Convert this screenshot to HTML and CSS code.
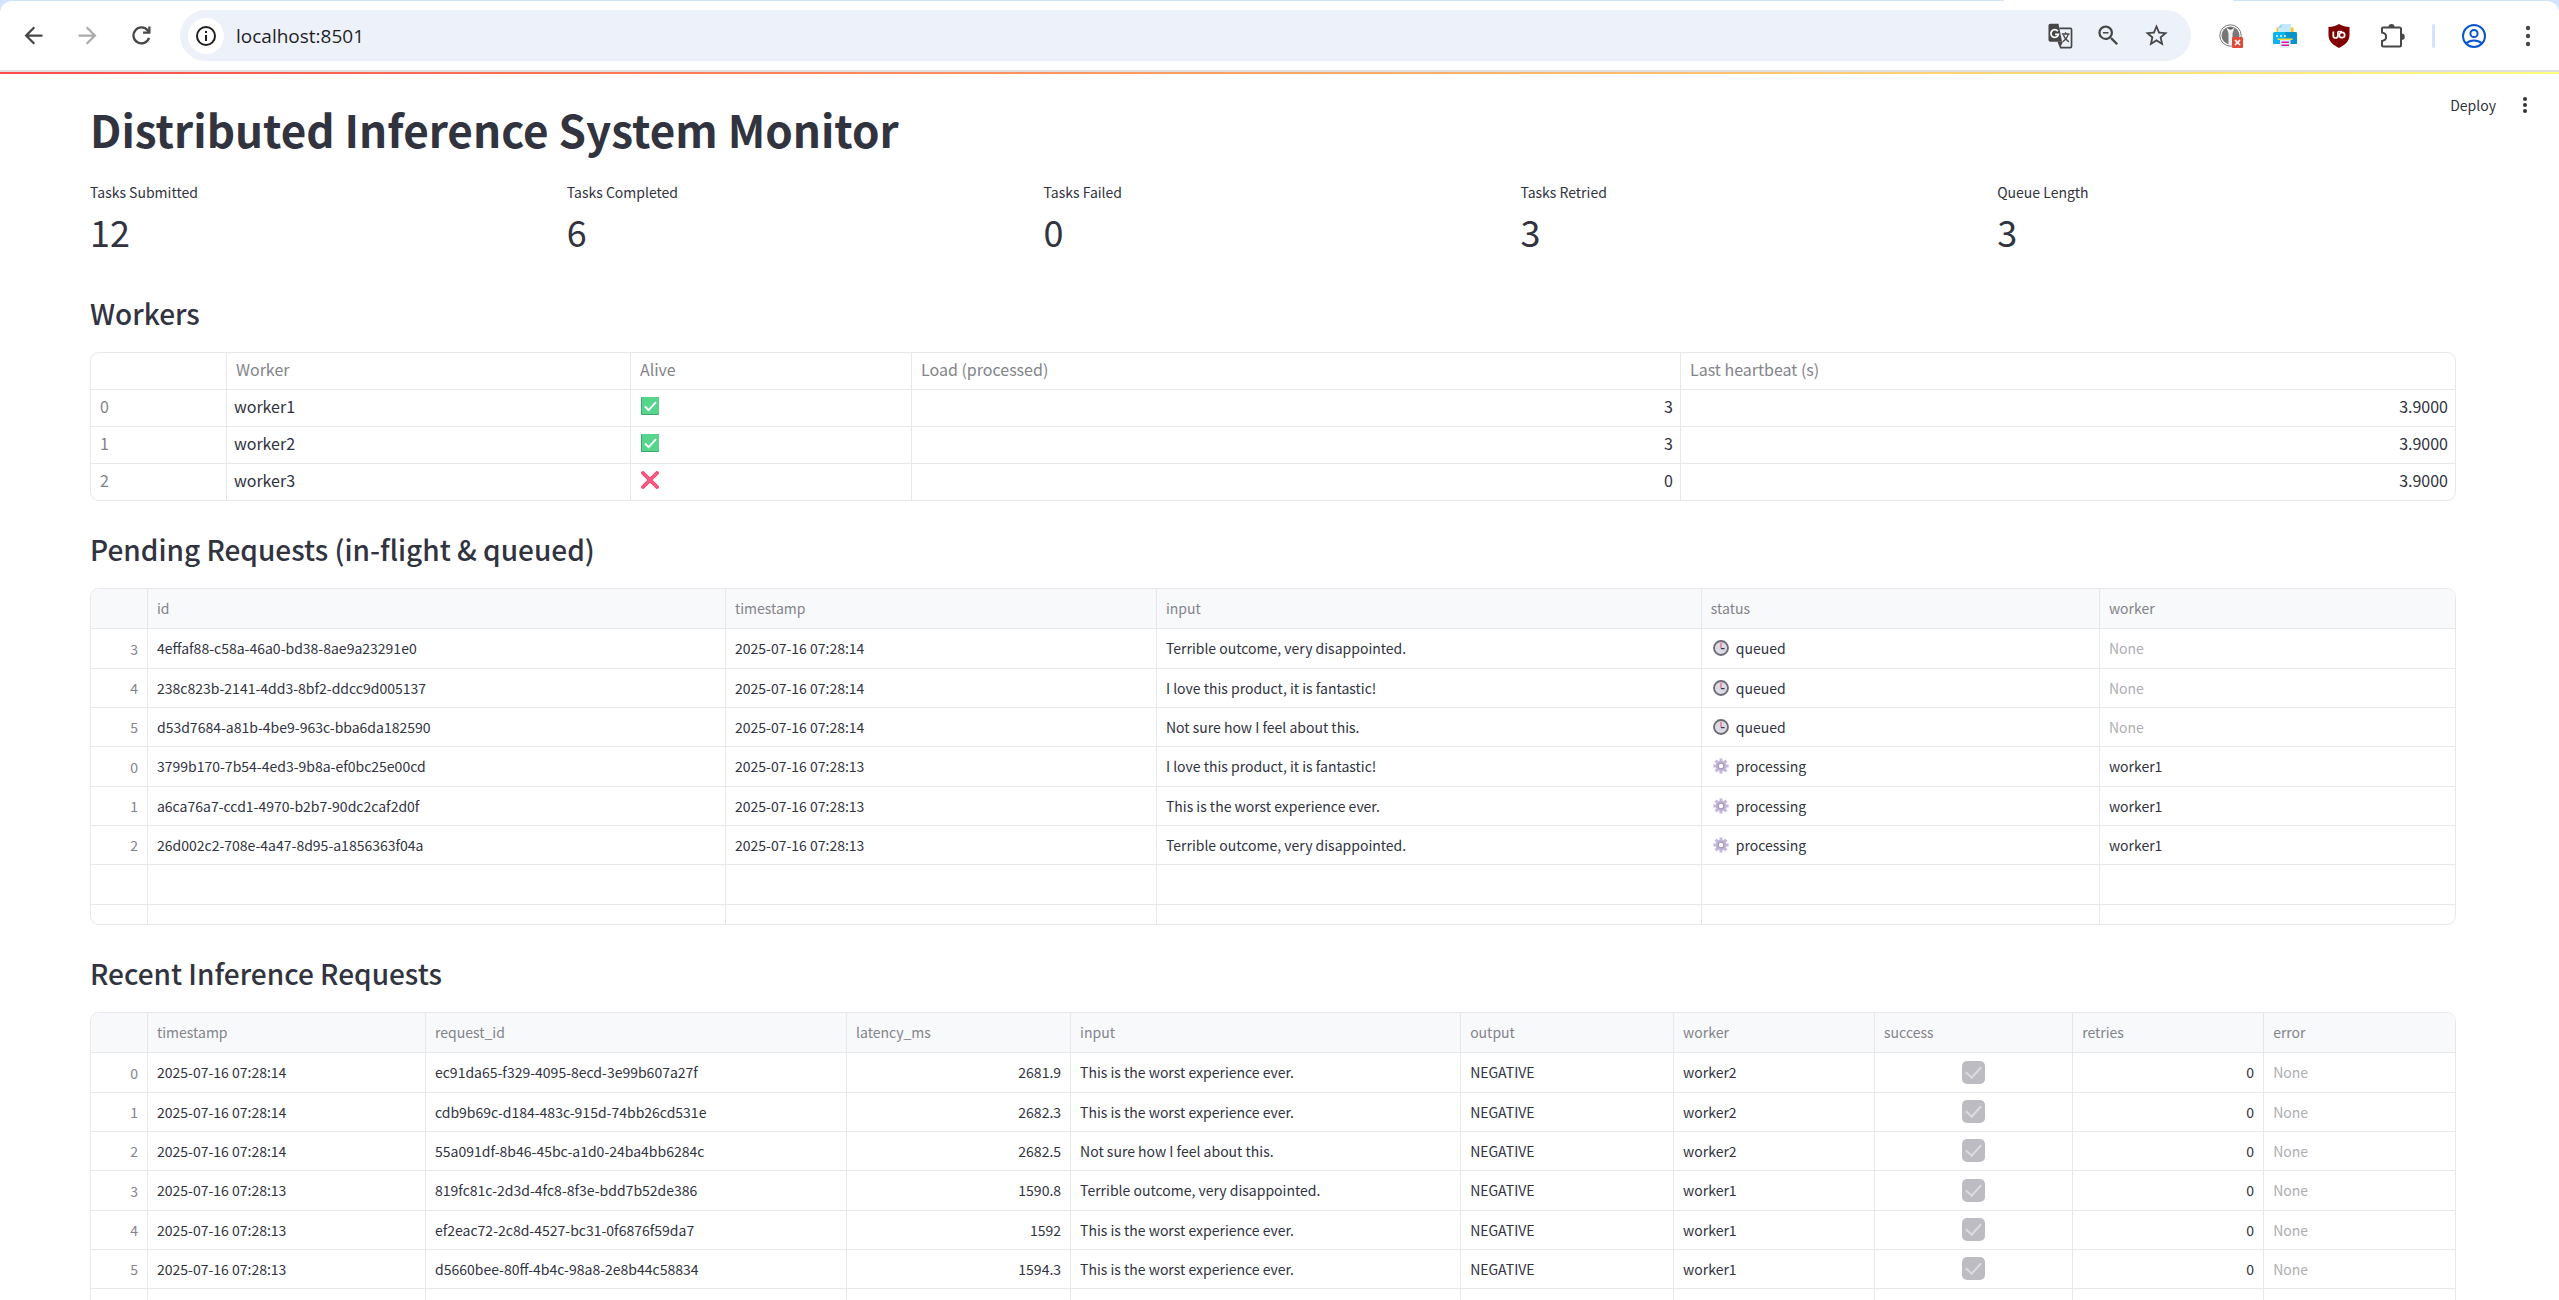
FILE: index.html
```html
<!DOCTYPE html>
<html lang="en">
<head>
<meta charset="utf-8">
<meta name="viewport" content="width=device-width, initial-scale=1">
<title>Distributed Inference System Monitor</title>
<link rel="stylesheet" href="styles.css">
</head>
<body>
<svg class="sprite" aria-hidden="true">
  <symbol id="i-check" viewBox="0 0 18 18">
    <rect width="18" height="18" rx="1" fill="#3fa673"/>
    <rect x="1" width="17" height="17" rx="1" fill="#55d68c"/>
    <path d="M4 9.5l3.6 3.7L15 5.2" fill="none" stroke="#fff" stroke-width="1.9"/>
  </symbol>
  <symbol id="i-cross" viewBox="0 0 18 18">
    <path d="M2 2l14 14M16 2L2 16" fill="none" stroke="#f8416f" stroke-width="3.8" stroke-linecap="round"/>
    <path d="M2 2l14 14M16 2L2 16" fill="none" stroke="#fb6184" stroke-width="1.6" stroke-linecap="round"/>
  </symbol>
  <symbol id="i-clock" viewBox="0 0 16 16">
    <circle cx="8" cy="8" r="7" fill="#dcdae2" stroke="#6c6a72" stroke-width="1.8"/>
    <path d="M8 2.8V8.6" stroke="#e8466f" stroke-width="1"/>
    <path d="M8 8.6h3.6" stroke="#40354f" stroke-width="1.3"/>
  </symbol>
  <symbol id="i-gear" viewBox="0 0 16 16">
    <g stroke="#c6b9dc" stroke-width="3">
      <path d="M8 .4v15.2M.4 8h15.2M2.6 2.6l10.800 10.800M13.400 2.600L2.600 13.400"/>
    </g>
    <circle cx="8" cy="8" r="5.400" fill="#c3b5da"/>
    <circle cx="8" cy="8" r="2.800" fill="#fff" stroke="#a69abb" stroke-width="1.200"/>
  </symbol>
</svg>

<header class="browser">
  <div class="tab-strip"><span class="tab-foot"></span></div>
  <nav class="toolbar" aria-label="Browser">
    <div class="nav-buttons">
      <button class="icon-btn" type="button" aria-label="Back"><svg class="icon" viewBox="0 0 24 24"><path d="M20 11H7.83l5.59-5.59L12 4l-8 8 8 8 1.41-1.41L7.83 13H20v-2z"/></svg></button>
      <button class="icon-btn muted" type="button" aria-label="Forward"><svg class="icon" viewBox="0 0 24 24"><path d="M4 11h12.17l-5.59-5.59L12 4l8 8-8 8-1.41-1.41L16.17 13H4v-2z"/></svg></button>
      <button class="icon-btn" type="button" aria-label="Reload"><svg class="icon" viewBox="0 0 24 24"><path d="M18.7 14.2A7.1 7.1 0 1 1 17.6 7.6L19 9" fill="none" stroke="currentColor" stroke-width="2"/><path d="M20 4v6.4h-6.6v-2H18V4z"/></svg></button>
    </div>
    <div class="omnibox">
      <button class="site-info" type="button" aria-label="View site information"><svg class="icon-sm" viewBox="0 0 24 24"><circle cx="12" cy="12" r="9" fill="none" stroke="currentColor" stroke-width="2"/><path d="M11 7h2v2h-2zM11 11h2v6h-2z"/></svg></button>
      <input class="url" type="text" value="localhost:8501" aria-label="Address">
      <button class="icon-btn" type="button" aria-label="Translate"><svg class="icon" viewBox="0 0 24 24"><path d="M3 1.5h7.2l3.2 16H3a1.7 1.7 0 0 1-1.700-1.700V3.200A1.700 1.700 0 0 1 3 1.500z"/><path d="M11 5.700h9.800a1 1 0 0 1 1 1v15a1 1 0 0 1-1 1h-8.600l-2-5" fill="none" stroke="currentColor" stroke-width="1.500"/><path d="M9.600 8.200A3.400 3.400 0 1 0 10.200 11H7.200" fill="none" stroke="#fff" stroke-width="1.500"/><path d="M13.200 10.700h6.800M16.500 9v1.700M18.800 10.700c-.6 3-2.400 5-4.800 6.800M14.600 11.500c.8 2.500 2.400 4.500 4.800 6.200" fill="none" stroke="currentColor" stroke-width="1.200"/><path d="M10 17.500h4.200l-2 4z"/></svg></button>
      <button class="icon-btn" type="button" aria-label="Zoom"><svg class="icon" viewBox="0 0 24 24"><path d="M15.500 14h-.79l-.28-.27A6.471 6.471 0 0 0 16 9.500 6.500 6.500 0 1 0 9.500 16c1.610 0 3.090-.59 4.230-1.570l.27.280v.79l5 4.990L20.490 19l-4.990-5zm-6 0C7.010 14 5 11.990 5 9.500S7.010 5 9.500 5 14 7.010 14 9.500 11.990 14 9.500 14zM7 8.800h5v1.500H7z"/></svg></button>
      <button class="icon-btn" type="button" aria-label="Bookmark this tab"><svg class="icon" viewBox="0 0 24 24"><path d="M22 9.240l-7.190-.62L12 2 9.190 8.630 2 9.240l5.460 4.730L5.820 21 12 17.270 18.180 21l-1.630-7.030L22 9.240zM12 15.400l-3.760 2.270 1-4.280-3.320-2.880 4.380-.38L12 6.100l1.710 4.040 4.380.380-3.320 2.880 1 4.280L12 15.400z"/></svg></button>
    </div>
    <div class="extensions">
      <button class="icon-btn" type="button" aria-label="Password manager"><svg class="icon-sm" viewBox="0 0 24 24"><circle cx="11.500" cy="11.500" r="10.700" fill="#fff" stroke="#777" stroke-width="1"/><circle cx="11.500" cy="11.500" r="9" fill="#777"/><path d="M7.500 3.500l2 6v11.500h4V9.500l2-6-2.500 2h-3z" fill="#f2f2f2"/><path d="M10 4h3l-1.500 1.500z" fill="#444"/><rect x="13" y="13" width="11" height="11" rx="1" fill="#e04a3a"/><path d="M16 16l5 5M21 16l-5 5" stroke="#fff" stroke-width="1.700"/></svg></button>
      <button class="icon-btn" type="button" aria-label="Print"><svg class="icon-sm" viewBox="0 0 24 24"><path d="M3.500 3.500h17V9h-17z" fill="#ffc10e"/><path d="M8.500 0H18v9H5V3.500z" fill="#c2e8fa"/><path d="M8.500 0v3.500H5z" fill="#8ecfe9"/><path d="M1.500 8h21A1.500 1.500 0 0 1 24 9.500V19a1 1 0 0 1-1 1H1a1 1 0 0 1-1-1V9.500A1.500 1.500 0 0 1 1.500 8z" fill="#0bb4ea"/><path d="M12 8h10.500A1.500 1.500 0 0 1 24 9.500V19a1 1 0 0 1-1 1H12z" fill="#0894cb"/><path d="M3 12h2M7 12h2M11 12h2" stroke="#d6f3ff" stroke-width="1.500"/><path d="M4.500 14.500h15V16h-15z" fill="#ffd83b"/><path d="M7 16h10.500v8H7z" fill="#dff1fa"/><path d="M8.500 18.200h7.500M8.500 21.200h7.500" stroke="#e012a0" stroke-width="1.500"/></svg></button>
      <button class="icon-btn" type="button" aria-label="uBlock Origin"><svg class="icon-sm" viewBox="0 0 24 24"><path d="M12 0c3 2 7 3 10.500 3v8c0 6-4.500 10-10.500 13C6 21 1.500 17 1.500 11V3C5 3 9 2 12 0z" fill="#800000"/><path d="M6.300 7.500v4.200a2.300 2.300 0 0 0 4.600 0V7.500" fill="none" stroke="#fff" stroke-width="1.700"/><circle cx="15" cy="11" r="2.700" fill="none" stroke="#fff" stroke-width="1.700"/><path d="M11 7.500h4" stroke="#fff" stroke-width="1.400"/></svg></button>
      <button class="icon-btn" type="button" aria-label="Extensions"><svg class="icon-sm" viewBox="0 0 24 24"><path d="M2.500 3.500h16a1.500 1.500 0 0 1 1.500 1.500v16.500a1 1 0 0 1-1 1H2a1 1 0 0 1-1-1v-4.500c5.500-1 5.500-7.500 0-8.500V4.500a1 1 0 0 1 1-1z" fill="none" stroke="currentColor" stroke-width="2"/><path d="M7.500 3a3 3 0 0 1 6 0zM20.500 9.500a3 3 0 0 1 0 6.500z"/></svg></button>
    </div>
    <span class="divider"></span>
    <div class="extensions">
      <button class="icon-btn profile" type="button" aria-label="Profile"><svg class="icon-sm" viewBox="0 0 24 24" fill="none" stroke="currentColor" stroke-width="2"><circle cx="12" cy="12" r="11"/><circle cx="12" cy="9.500" r="3.600"/><path d="M4 19.500c4.500-4 11.500-4 16 0"/></svg></button>
      <button class="icon-btn" type="button" aria-label="Browser menu"><svg class="icon-sm" viewBox="0 0 24 24"><circle cx="12" cy="4" r="2.200"/><circle cx="12" cy="12" r="2.200"/><circle cx="12" cy="20" r="2.200"/></svg></button>
    </div>
  </nav>
</header>

<main class="app">
  <div class="decoration"></div>
  <div class="app-actions">
    <button class="deploy" type="button">Deploy</button>
    <button class="app-menu" type="button" aria-label="Main menu"><svg class="icon-xs" viewBox="0 0 18 18"><circle cx="9" cy="3" r="2"/><circle cx="9" cy="9" r="2"/><circle cx="9" cy="15" r="2"/></svg></button>
  </div>

  <div class="content">
    <h1>Distributed Inference System Monitor</h1>

    <dl class="metrics">
      <div><dt>Tasks Submitted</dt><dd>12</dd></div>
      <div><dt>Tasks Completed</dt><dd>6</dd></div>
      <div><dt>Tasks Failed</dt><dd>0</dd></div>
      <div><dt>Tasks Retried</dt><dd>3</dd></div>
      <div><dt>Queue Length</dt><dd>3</dd></div>
    </dl>

    <section>
      <h2>Workers</h2>
      <div class="frame">
        <table class="workers">
          <thead><tr><th class="w-index"></th><th class="w-name">Worker</th><th class="w-alive">Alive</th><th class="w-load">Load (processed)</th><th>Last heartbeat (s)</th></tr></thead>
          <tbody>
            <tr><th>0</th><td>worker1</td><td><svg class="mark" role="img" aria-label="alive"><use href="#i-check"/></svg></td><td class="num">3</td><td class="num">3.9000</td></tr>
            <tr><th>1</th><td>worker2</td><td><svg class="mark" role="img" aria-label="alive"><use href="#i-check"/></svg></td><td class="num">3</td><td class="num">3.9000</td></tr>
            <tr><th>2</th><td>worker3</td><td><svg class="mark" role="img" aria-label="down"><use href="#i-cross"/></svg></td><td class="num">0</td><td class="num">3.9000</td></tr>
          </tbody>
        </table>
      </div>
    </section>

    <section>
      <h2>Pending Requests (in-flight &amp; queued)</h2>
      <div class="frame">
        <table class="grid pending">
          <thead><tr><th class="p-index"></th><th class="p-id">id</th><th class="p-time">timestamp</th><th class="p-input">input</th><th class="p-status">status</th><th>worker</th></tr></thead>
          <tbody>
            <tr><th>3</th><td>4effaf88-c58a-46a0-bd38-8ae9a23291e0</td><td>2025-07-16 07:28:14</td><td>Terrible outcome, very disappointed.</td><td><span class="status"><svg><use href="#i-clock"/></svg>queued</span></td><td class="none">None</td></tr>
            <tr><th>4</th><td>238c823b-2141-4dd3-8bf2-ddcc9d005137</td><td>2025-07-16 07:28:14</td><td>I love this product, it is fantastic!</td><td><span class="status"><svg><use href="#i-clock"/></svg>queued</span></td><td class="none">None</td></tr>
            <tr><th>5</th><td>d53d7684-a81b-4be9-963c-bba6da182590</td><td>2025-07-16 07:28:14</td><td>Not sure how I feel about this.</td><td><span class="status"><svg><use href="#i-clock"/></svg>queued</span></td><td class="none">None</td></tr>
            <tr><th>0</th><td>3799b170-7b54-4ed3-9b8a-ef0bc25e00cd</td><td>2025-07-16 07:28:13</td><td>I love this product, it is fantastic!</td><td><span class="status"><svg><use href="#i-gear"/></svg>processing</span></td><td>worker1</td></tr>
            <tr><th>1</th><td>a6ca76a7-ccd1-4970-b2b7-90dc2caf2d0f</td><td>2025-07-16 07:28:13</td><td>This is the worst experience ever.</td><td><span class="status"><svg><use href="#i-gear"/></svg>processing</span></td><td>worker1</td></tr>
            <tr><th>2</th><td>26d002c2-708e-4a47-8d95-a1856363f04a</td><td>2025-07-16 07:28:13</td><td>Terrible outcome, very disappointed.</td><td><span class="status"><svg><use href="#i-gear"/></svg>processing</span></td><td>worker1</td></tr>
            <tr><th></th><td></td><td></td><td></td><td></td><td></td></tr>
            <tr class="stub"><th></th><td></td><td></td><td></td><td></td><td></td></tr>
          </tbody>
        </table>
      </div>
    </section>

    <section>
      <h2>Recent Inference Requests</h2>
      <div class="frame">
        <table class="grid recent">
          <thead><tr><th class="r-index"></th><th class="r-time">timestamp</th><th class="r-id">request_id</th><th class="r-latency">latency_ms</th><th class="r-input">input</th><th class="r-output">output</th><th class="r-worker">worker</th><th class="r-success">success</th><th class="r-retries">retries</th><th>error</th></tr></thead>
          <tbody>
            <tr><th>0</th><td>2025-07-16 07:28:14</td><td>ec91da65-f329-4095-8ecd-3e99b607a27f</td><td class="num">2681.9</td><td>This is the worst experience ever.</td><td>NEGATIVE</td><td>worker2</td><td class="tick"><input type="checkbox" checked disabled aria-label="success"></td><td class="num">0</td><td class="none">None</td></tr>
            <tr><th>1</th><td>2025-07-16 07:28:14</td><td>cdb9b69c-d184-483c-915d-74bb26cd531e</td><td class="num">2682.3</td><td>This is the worst experience ever.</td><td>NEGATIVE</td><td>worker2</td><td class="tick"><input type="checkbox" checked disabled aria-label="success"></td><td class="num">0</td><td class="none">None</td></tr>
            <tr><th>2</th><td>2025-07-16 07:28:14</td><td>55a091df-8b46-45bc-a1d0-24ba4bb6284c</td><td class="num">2682.5</td><td>Not sure how I feel about this.</td><td>NEGATIVE</td><td>worker2</td><td class="tick"><input type="checkbox" checked disabled aria-label="success"></td><td class="num">0</td><td class="none">None</td></tr>
            <tr><th>3</th><td>2025-07-16 07:28:13</td><td>819fc81c-2d3d-4fc8-8f3e-bdd7b52de386</td><td class="num">1590.8</td><td>Terrible outcome, very disappointed.</td><td>NEGATIVE</td><td>worker1</td><td class="tick"><input type="checkbox" checked disabled aria-label="success"></td><td class="num">0</td><td class="none">None</td></tr>
            <tr><th>4</th><td>2025-07-16 07:28:13</td><td>ef2eac72-2c8d-4527-bc31-0f6876f59da7</td><td class="num">1592</td><td>This is the worst experience ever.</td><td>NEGATIVE</td><td>worker1</td><td class="tick"><input type="checkbox" checked disabled aria-label="success"></td><td class="num">0</td><td class="none">None</td></tr>
            <tr><th>5</th><td>2025-07-16 07:28:13</td><td>d5660bee-80ff-4b4c-98a8-2e8b44c58834</td><td class="num">1594.3</td><td>This is the worst experience ever.</td><td>NEGATIVE</td><td>worker1</td><td class="tick"><input type="checkbox" checked disabled aria-label="success"></td><td class="num">0</td><td class="none">None</td></tr>
            <tr><th></th><td></td><td></td><td></td><td></td><td></td><td></td><td></td><td></td><td></td></tr>
          </tbody>
        </table>
      </div>
    </section>
  </div>
</main>
</body>
</html>
```
FILE: styles.css
```css
:root {
  --text: #31333f;
  --text-soft: #83848b;
  --text-faint: #adadb2;
  --line: #e8e8ea;
  --head: #f8f9fb;
  --chrome: #474747;
}

* { box-sizing: border-box; }

body {
  margin: 0;
  height: 100vh;
  display: flex;
  flex-direction: column;
  overflow: hidden;
  background: #fff;
  color: var(--text);
  font-family: "Noto Sans CJK SC", "Noto Sans", sans-serif;
  font-size: 14px;
  line-height: 24px;
}

button {
  border: 0;
  padding: 0;
  background: none;
  color: inherit;
  font: inherit;
}

.sprite { display: none; }

/* Browser toolbar */
.browser {
  flex: none;
  background: #d3e3fd;
  border-bottom: 2px solid #dfe1e0;
}

.tab-strip {
  height: 1px;
  display: flex;
  justify-content: flex-end;
  padding-right: 326px;
}

.tab-foot { width: 229px; background: #fff; }

.toolbar {
  height: 69px;
  display: flex;
  align-items: center;
  padding: 0 7px 0 9px;
  border-radius: 12px 12px 0 0;
  background: #fff;
  color: var(--chrome);
}

.nav-buttons,
.extensions { display: flex; gap: 6px; }

.icon-btn {
  width: 48px;
  height: 48px;
  display: grid;
  place-items: center;
}

.icon-btn.muted { color: #acacac; }
.icon-btn.profile { color: #0b57d0; }

.icon { width: 27px; height: 27px; fill: currentColor; }
.icon-sm { width: 24px; height: 24px; }
.icon-xs { width: 18px; height: 18px; }
.icon-sm:not([fill]), .icon-xs { fill: currentColor; }

.omnibox {
  flex: 1;
  height: 51px;
  display: flex;
  align-items: center;
  margin: 0 16px 0 15px;
  padding: 0 11px 0 8px;
  border-radius: 26px;
  background: #edf1fa;
}

.site-info {
  width: 36px;
  height: 36px;
  display: grid;
  place-items: center;
  border-radius: 50%;
  background: #fff;
  color: #1f1f1f;
}

.url {
  flex: 1;
  min-width: 0;
  border: 0;
  padding: 0 12px;
  background: none;
  color: #1f1f1f;
  font-family: "Open Sans", sans-serif;
  font-size: 19px;
}

.divider {
  width: 3px;
  height: 24px;
  margin: 0 15px;
  border-radius: 2px;
  background: #d3e3fd;
}

/* App shell */
.app {
  flex: 1;
  min-height: 0;
  overflow: hidden;
  position: relative;
}

.decoration {
  height: 2px;
  background: linear-gradient(90deg, #ff4b4b, #fffd80);
}

.app-actions {
  position: absolute;
  top: 21px;
  right: 25px;
  display: flex;
  align-items: center;
  gap: 20px;
}

.app-menu { display: grid; place-items: center; }

.content { padding: 25px 103px 0 90px; }

h1 {
  margin: 0 0 21px;
  font-size: 44px;
  line-height: 60px;
  font-weight: 700;
}

h2 {
  margin: 30px 0 21px;
  font-size: 28px;
  line-height: 36px;
  font-weight: 500;
}

.metrics {
  display: grid;
  grid-template-columns: repeat(5, 1fr);
  gap: 18px;
  margin: 0;
  padding-bottom: 7px;
}

.metrics dd {
  margin: 0;
  font-size: 36px;
  line-height: 54px;
}

/* Tables */
.frame {
  border: 1px solid var(--line);
  border-radius: 9px;
  overflow: hidden;
}

table {
  width: 100%;
  table-layout: fixed;
  border-spacing: 0;
}

th, td {
  padding: 0 9px;
  border: solid var(--line);
  border-width: 0 1px 1px 0;
  text-align: left;
  white-space: nowrap;
}

th { color: var(--text-soft); font-weight: 400; }
th:last-child, td:last-child { border-right: 0; }
tbody tr:last-child > * { border-bottom: 0; }
.num { text-align: right; }
.none { color: var(--text-faint); }

.workers { font-size: 16px; }
.workers th, .workers td { height: 37px; padding-bottom: 4px; }
.workers td { padding-left: 7px; padding-right: 7px; }
.workers tbody tr:last-child > * { height: 36px; }
.mark { display: block; width: 18px; height: 18px; margin-left: 3px; }

.grid th, .grid td { height: 39px; }
.grid tr:nth-child(3n+1) > * { height: 40px; }
.grid thead th { padding-bottom: 1px; background: var(--head); }
.grid tbody th { text-align: right; }
.grid tbody td { padding-bottom: 1px; }
.grid .stub > * { height: 19px; }

.status {
  display: flex;
  align-items: center;
  gap: 7px;
  padding-left: 2px;
}

.status svg { width: 16px; height: 16px; }

.tick input {
  appearance: none;
  display: grid;
  place-items: center;
  width: 23px;
  height: 23px;
  margin: 0 auto;
  border-radius: 5px;
  background: #bdbcc2;
}

.tick input::before {
  content: "";
  width: 7px;
  height: 13px;
  margin-bottom: 4px;
  border: solid #dcdce0;
  border-width: 0 2px 2px 0;
  rotate: 42deg;
}

/* Column widths */
.w-index { width: 5.75%; }
.w-name { width: 17.09%; }
.w-alive { width: 11.89%; }
.w-load { width: 32.53%; }

.p-index, .r-index { width: 2.41%; }
.p-id { width: 24.45%; }
.p-time { width: 18.23%; }
.p-input { width: 23.05%; }
.p-status { width: 16.84%; }

.r-time { width: 11.76%; }
.r-id { width: 17.81%; }
.r-latency { width: 9.48%; }
.r-input { width: 16.5%; }
.r-output { width: 9.01%; }
.r-worker { width: 8.5%; }
.r-success { width: 8.38%; }
.r-retries { width: 8.08%; }
```
